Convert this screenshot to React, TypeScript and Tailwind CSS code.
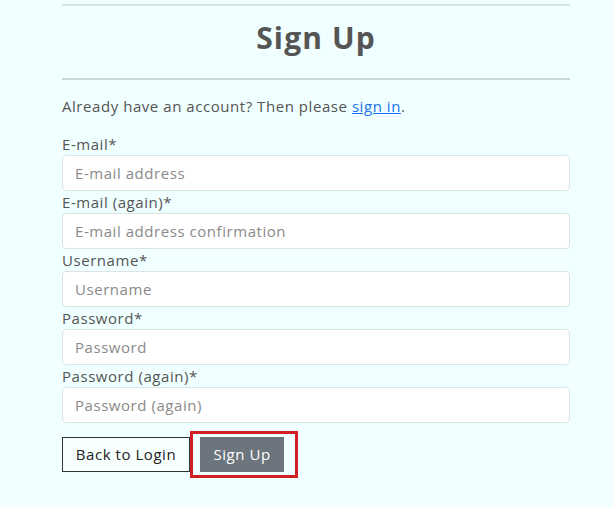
const fields = [
  { label: 'E-mail*', placeholder: 'E-mail address', type: 'email' },
  { label: 'E-mail (again)*', placeholder: 'E-mail address confirmation', type: 'email' },
  { label: 'Username*', placeholder: 'Username', type: 'text' },
  { label: 'Password*', placeholder: 'Password', type: 'password' },
  { label: 'Password (again)*', placeholder: 'Password (again)', type: 'password' },
];

const App = () => {
  return (
    <div
      className="min-h-screen w-full bg-[#f0ffff] text-[#444] tracking-[0.55px]"
      style={{ fontFamily: '"Open Sans", "Liberation Sans", sans-serif' }}
    >
      <div className="ml-[62px] w-[508px] pt-[4px]">
        <hr className="border-0 border-t-2 border-[#d6e4e4]" />
        <h1 className="h-[72px] pt-[12px] text-center text-[30px] font-bold leading-[40px] tracking-[1.1px] text-[#555]">
          Sign Up
        </h1>
        <hr className="border-0 border-t-2 border-[#c9d8d8]" />
        <p className="mt-[15px] text-[15px] leading-[22px] text-[#555]">
          Already have an account? Then please{' '}
          <a href="#" className="text-[#1a73e8] underline">
            sign in
          </a>
          .
        </p>
        <form className="mt-[16px]">
          {fields.map((f) => (
            <div key={f.label}>
              <label className="block h-[22px] text-[15px] leading-[22px] text-[#555]">{f.label}</label>
              <input
                type={f.type}
                placeholder={f.placeholder}
                className="block h-[36px] w-full rounded-[4px] border border-[#dde3e3] bg-white px-[12px] text-[15px] text-[#555] placeholder:text-[#8a8a8a] outline-none"
              />
            </div>
          ))}
          <div className="mt-[8px] flex items-center">
            <button
              type="button"
              className="h-[35px] w-[128px] border border-[#333] bg-[#f7ffff] text-[15px] text-[#222]"
            >
              Back to Login
            </button>
            <span className="flex h-[47px] w-[108px] items-center border-[3px] border-[#d21f26] pl-[7px]">
              <button type="button" className="h-[35px] w-[84px] bg-[#6c757d] text-[15px] text-white">
                Sign Up
              </button>
            </span>
          </div>
        </form>
      </div>
    </div>
  );
};

export default App;
